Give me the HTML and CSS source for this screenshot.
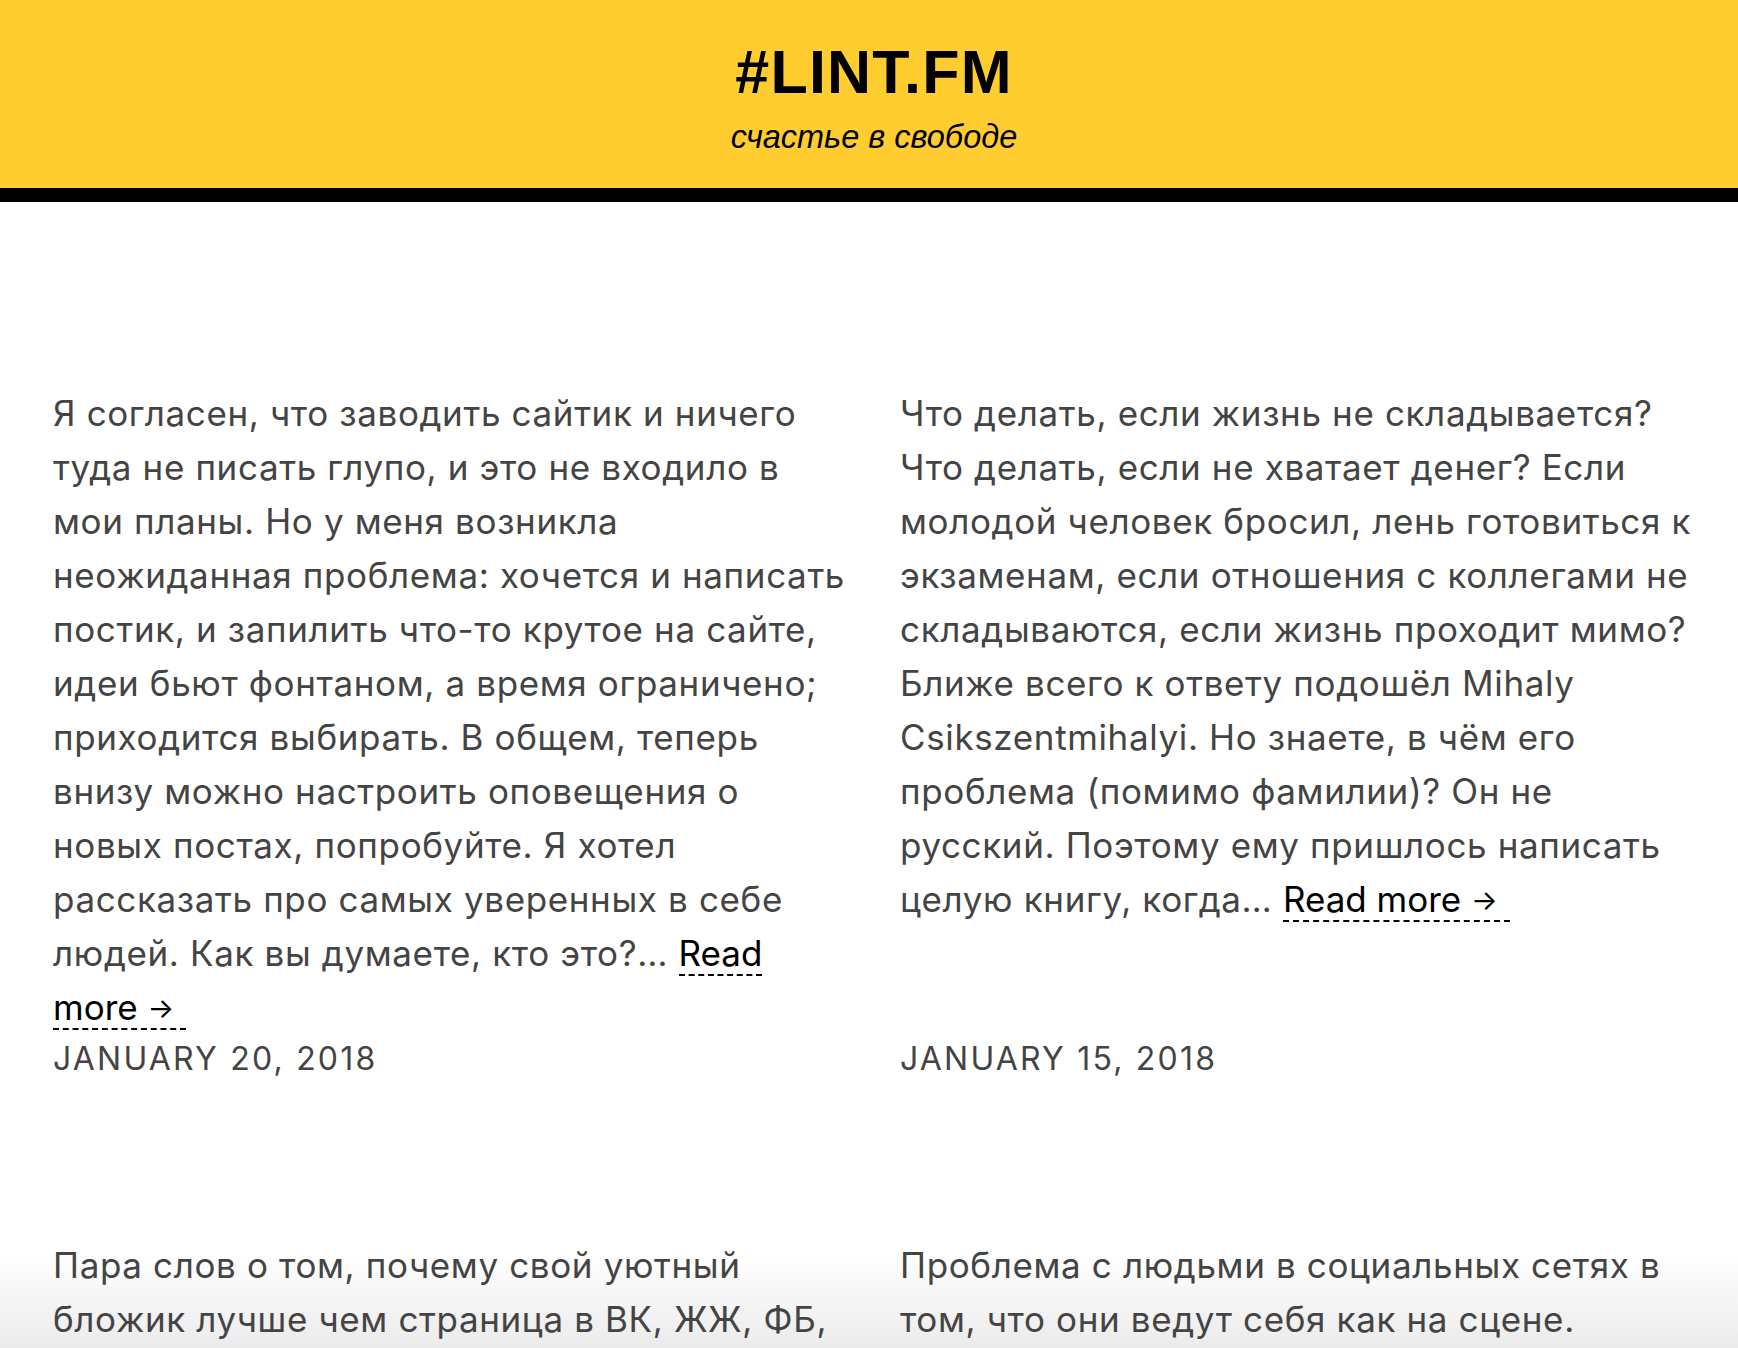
FILE: index.html
```html
<!DOCTYPE html>
<html lang="ru">
<head>
<meta charset="utf-8">
<title>#LINT.FM</title>
<link rel="stylesheet" href="styles.css">
</head>
<body>
<header class="site-header">
  <h1 class="site-title">#LINT.FM</h1>
  <p class="site-tagline">счастье в свободе</p>
</header>
<main class="posts">
  <article class="post">
    <p class="post-excerpt">Я согласен, что заводить сайтик и ничего туда не писать глупо, и это не входило в мои планы. Но у меня возникла неожиданная проблема: хочется и написать постик, и запилить что-то крутое на сайте, идеи бьют фонтаном, а время ограничено; приходится выбирать. В общем, теперь внизу можно настроить оповещения о новых постах, попробуйте. Я хотел рассказать про самых уверенных в себе людей. Как вы думаете, кто это?… <a class="read-more" href="#">Read more <span class="arrow">→</span></a></p>
    <div class="post-date">January 20, 2018</div>
  </article>
  <article class="post">
    <p class="post-excerpt">Что делать, если жизнь не складывается? Что делать, если не хватает денег? Если молодой человек бросил, лень готовиться к экзаменам, если отношения с коллегами не складываются, если жизнь проходит мимо? Ближе всего к ответу подошёл Mihaly Csikszentmihalyi. Но знаете, в чём его проблема (помимо фамилии)? Он не русский. Поэтому ему пришлось написать целую книгу, когда… <a class="read-more" href="#">Read more <span class="arrow">→</span></a></p>
    <div class="post-date">January 15, 2018</div>
  </article>
  <article class="post">
    <p class="post-excerpt">Пара слов о том, почему свой уютный бложик лучше чем страница в ВК, ЖЖ, ФБ, или любой другой социальной сети. Всё дело в том, что здесь я сам решаю, что и как показывать… <a class="read-more" href="#">Read more <span class="arrow">→</span></a></p>
    <div class="post-date">January 10, 2018</div>
  </article>
  <article class="post">
    <p class="post-excerpt">Проблема с людьми в социальных сетях в том, что они ведут себя как на сцене. Постоянно играют роль перед публикой… <a class="read-more" href="#">Read more <span class="arrow">→</span></a></p>
    <div class="post-date">January 5, 2018</div>
  </article>
</main>
</body>
</html>
```
FILE: styles.css
```css
html {
  margin: 0;
  padding: 0;
  background: linear-gradient(to bottom, #fff 0%, #fff 93%, #ebebeb 100%) fixed;
  min-height: 100%;
}

body {
  margin: 0;
  padding: 0;
  font-family: Inter, "Noto Sans", sans-serif;
  color: #444;
}

.site-header {
  background: #ffcd30;
  border-bottom: 14px solid #000;
  padding: 38px 0 31px 10px;
  text-align: center;
  color: #000;
  font-family: "Liberation Sans", Arial, sans-serif;
}

.site-title {
  margin: 0;
  font-size: 61px;
  line-height: 68px;
  font-weight: bold;
  letter-spacing: 1.2px;
}

.site-tagline {
  margin: 11px 0 0;
  font-size: 32.5px;
  line-height: 40px;
  font-style: italic;
}

.posts {
  display: grid;
  grid-template-columns: 1fr 1fr;
  column-gap: 49px;
  row-gap: 155px;
  padding: 184px 40px 120px 53px;
}

.post {
  display: flex;
  flex-direction: column;
}

.post-excerpt {
  margin: 0;
  font-size: 35px;
  line-height: 54px;
  letter-spacing: 0.63px;
}

.read-more {
  color: #000;
  text-decoration: none;
  border-bottom: 2px dashed #000;
  padding-right: 12px;
  letter-spacing: 0;
}

.arrow {
  font-size: 28px;
  vertical-align: 2px;
}

.post-date {
  margin-top: auto;
  font-size: 32px;
  line-height: 48px;
  text-transform: uppercase;
  letter-spacing: 2.2px;
}
```
